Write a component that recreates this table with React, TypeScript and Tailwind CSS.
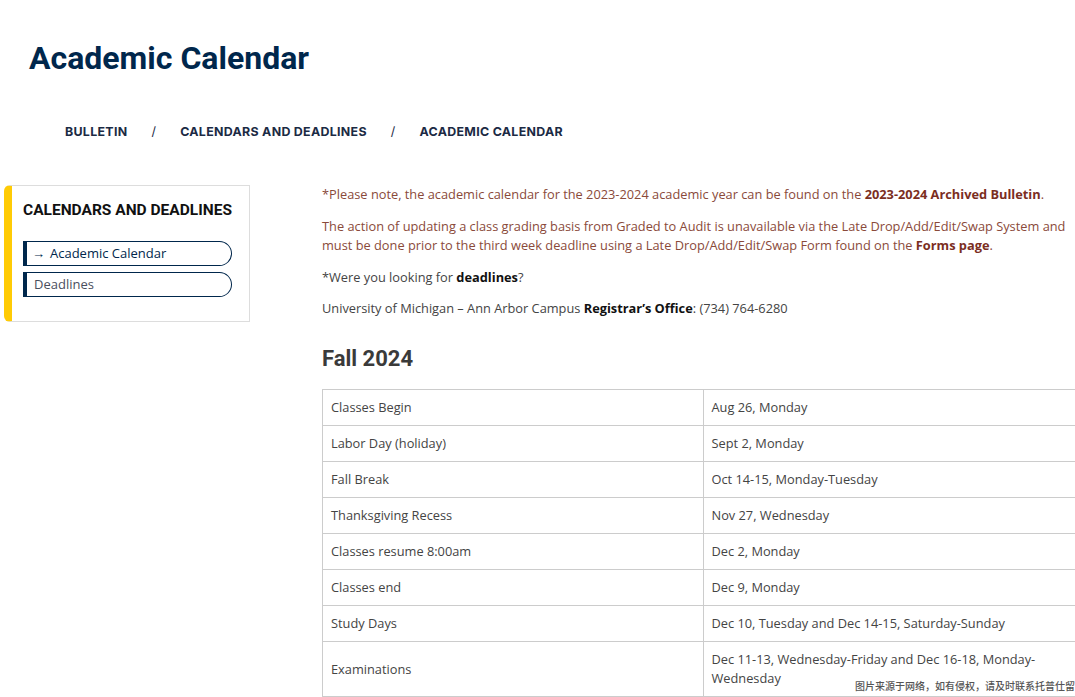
import React from 'react';

const rows: [string, string][] = [
  ['Classes Begin', 'Aug 26, Monday'],
  ['Labor Day (holiday)', 'Sept 2, Monday'],
  ['Fall Break', 'Oct 14-15, Monday-Tuesday'],
  ['Thanksgiving Recess', 'Nov 27, Wednesday'],
  ['Classes resume 8:00am', 'Dec 2, Monday'],
  ['Classes end', 'Dec 9, Monday'],
  ['Study Days', 'Dec 10, Tuesday and Dec 14-15, Saturday-Sunday'],
  ['Examinations', 'Dec 11-13, Wednesday-Friday and Dec 16-18, Monday-Wednesday'],
];

const openSans = { fontFamily: '"Open Sans", "Liberation Sans", sans-serif' };

export default function App() {
  return (
    <div className="relative w-[1075px] h-[697px] overflow-hidden bg-white">
      {/* Page title */}
      <h1 className="pl-[29px] pt-[38px] text-[32px] leading-[40px] font-bold text-[#00274c] font-['Roboto',sans-serif]">
        Academic Calendar
      </h1>

      {/* Breadcrumb */}
      <nav className="mt-[44px] pl-[65px] flex items-center gap-[24px] text-[12.4px] font-bold tracking-[0.3px] text-[#1b2a44] font-['Inter',sans-serif] h-[20px]">
        <span>BULLETIN</span>
        <span className="font-normal">/</span>
        <span>CALENDARS AND DEADLINES</span>
        <span className="font-normal">/</span>
        <span>ACADEMIC CALENDAR</span>
      </nav>

      <div className="mt-[43px] flex items-start">
        {/* Sidebar */}
        <aside className="ml-[4px] w-[246px] shrink-0 border border-[#dddddd] border-l-[8px] border-l-[#ffcb05] rounded-l-[6px] pl-[11px] pr-[17px] pt-[14px] pb-[24px]">
          <h2 className="whitespace-nowrap text-[15.5px] leading-[20px] font-bold text-[#111] font-['Roboto',sans-serif]">
            CALENDARS AND DEADLINES
          </h2>
          <ul className="mt-[21px] flex flex-col gap-[6px]" style={openSans}>
            <li className="h-[25px] flex items-center border-[1.5px] border-[#00274c] border-l-[4px] rounded-r-full pl-[5px] text-[13px] text-[#00274c]">
              <span className="mr-[5px]">→</span>Academic Calendar
            </li>
            <li className="h-[25px] flex items-center border-[1.5px] border-[#00274c] border-l-[4px] rounded-r-full pl-[7px] text-[13px] text-[#4a4f5e]">
              Deadlines
            </li>
          </ul>
        </aside>

        {/* Main content */}
        <main className="ml-[72px] w-[762px] shrink-0 text-[12.8px] leading-[19px] text-[#444]" style={openSans}>
          <p className="text-[#8a4a3a]">
            *Please note, the academic calendar for the 2023-2024 academic year can be found on the{' '}
            <b className="text-[#7b2e1f]">2023-2024 Archived Bulletin</b>.
          </p>
          <p className="mt-[13px] text-[#8a4a3a]">
            The action of updating a class grading basis from Graded to Audit is unavailable via the Late Drop/Add/Edit/Swap System and must be done prior to the third week deadline using a Late Drop/Add/Edit/Swap Form found on the{' '}
            <b className="text-[#7b2e1f]">Forms page</b>.
          </p>
          <p className="mt-[13px]">
            *Were you looking for <b className="text-[#111]">deadlines</b>?
          </p>
          <p className="mt-[12px]">
            University of Michigan – Ann Arbor Campus <b className="text-[#111]">Registrar’s Office</b>: (734) 764-6280
          </p>

          <h2 className="mt-[27px] text-[22px] leading-[28px] font-bold text-[#3a3a3a] font-['Roboto',sans-serif]">
            Fall 2024
          </h2>

          <table className="mt-[16px] w-full border-collapse table-fixed">
            <tbody>
              {rows.map(([a, b]) => (
                <tr key={a}>
                  <td className="border border-[#cccccc] px-[8px] py-[8px] align-middle">{a}</td>
                  <td className="border border-[#cccccc] px-[8px] py-[8px] align-middle pr-[40px]">{b}</td>
                </tr>
              ))}
            </tbody>
          </table>
        </main>
      </div>

      {/* Watermark */}
      <div className="absolute right-0 bottom-[5px] pl-[2px] text-[10px] leading-[12px] font-medium text-[#555] bg-white/70 font-['Noto_Sans_CJK_SC',sans-serif] whitespace-nowrap w-[222px] overflow-hidden">
        图片来源于网络，如有侵权，请及时联系托普仕留学删除
      </div>
    </div>
  );
}
